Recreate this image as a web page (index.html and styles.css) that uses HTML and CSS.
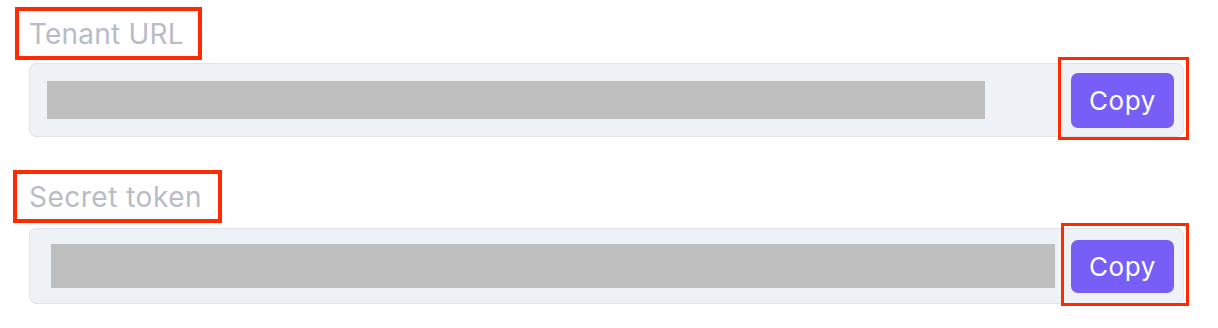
FILE: index.html
```html
<!DOCTYPE html>
<html>
<head>
<meta charset="utf-8">
<link rel="stylesheet" href="styles.css">
</head>
<body>
<div class="page">
  <section class="group group-url">
    <div class="label">Tenant URL</div>
    <div class="field field-url">
      <div class="redact redact-url"></div>
      <button class="copy copy-url">Copy</button>
    </div>
  </section>
  <section class="group group-token">
    <div class="label label-token">Secret token</div>
    <div class="field field-token">
      <div class="redact redact-token"></div>
      <button class="copy copy-token">Copy</button>
    </div>
  </section>
</div>
</body>
</html>
```
FILE: styles.css
```css
html, body {
  margin: 0;
  padding: 0;
  background: #ffffff;
}
body {
  font-family: Inter, "Liberation Sans", sans-serif;
  width: 1218px;
  height: 328px;
  overflow: hidden;
}
.page {
  display: flex;
  flex-direction: column;
  padding: 7px 0 0 15px;
}
.group {
  display: flex;
  flex-direction: column;
  align-items: flex-start;
}
.group-token {
  margin-top: 33px;
}
.label {
  box-sizing: border-box;
  height: 53px;
  display: flex;
  align-items: center;
  border: 4px solid #ff2a00;
  padding: 0 14px 0 10px;
  font-size: 28px;
  color: #b8bcc6;
  line-height: 1;
  letter-spacing: 0.2px;
}
.label-token {
  margin-left: -2px;
  padding-left: 12px;
  padding-right: 16px;
  letter-spacing: 0.5px;
}
.field {
  box-sizing: border-box;
  margin: 3px 0 0 14px;
  width: 1155px;
  display: flex;
  align-items: center;
  justify-content: space-between;
  background: #eef1f6;
  border: 1px solid #e1e4ea;
  border-radius: 7px;
  padding: 0 9px 0 17px;
}
.field-url {
  height: 74px;
}
.field-token {
  height: 76px;
  margin-top: 5px;
  padding-left: 21px;
}
.redact {
  background: #bfbfbf;
}
.redact-url {
  width: 938px;
  height: 38px;
}
.redact-token {
  width: 1004px;
  height: 44px;
}
.copy {
  position: relative;
  width: 103px;
  border: none;
  border-radius: 7px;
  background: #765ef6;
  color: #ffffff;
  font-family: Inter, "Liberation Sans", sans-serif;
  font-size: 26px;
  letter-spacing: 0.6px;
  padding: 0;
}
.copy::after {
  content: "";
  position: absolute;
  border: 3px solid #ff2a00;
  pointer-events: none;
}
.copy-url {
  height: 55px;
}
.copy-url::after {
  top: -16px;
  right: -15px;
  bottom: -12px;
  left: -13px;
}
.copy-token {
  height: 53px;
}
.copy-token::after {
  top: -17px;
  right: -15px;
  bottom: -13px;
  left: -10px;
}
```
